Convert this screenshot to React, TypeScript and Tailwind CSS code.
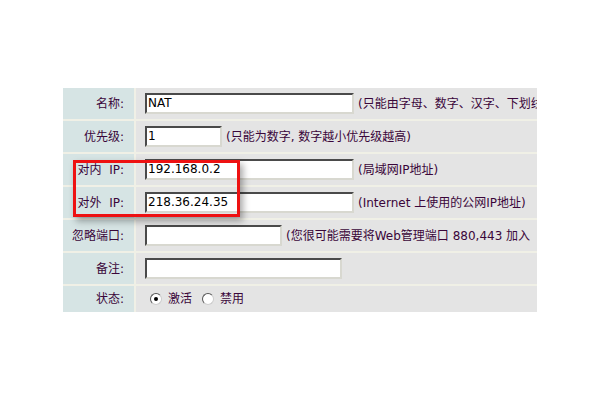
const font = { fontFamily: '"DejaVu Sans", "Noto Sans CJK SC", sans-serif' };

function Field({ w, value }: { w: string; value?: string }) {
  return (
    <div
      className={`${w} h-[21px] shrink-0 bg-white border-2 border-t-[#4a4a4a] border-l-[#4a4a4a] border-r-[#d8d8d0] border-b-[#d8d8d0] pl-[1px] text-[12px] leading-[17px] text-black`}
    >
      {value}
    </div>
  );
}

function Hint({ children }: { children: React.ReactNode }) {
  return <span className="ml-1 whitespace-nowrap text-[12px] text-[#3a063a]">{children}</span>;
}

function Radio({ checked }: { checked?: boolean }) {
  return (
    <span className="flex h-[12px] w-[12px] shrink-0 items-center justify-center rounded-full border border-t-[#555] border-l-[#555] border-r-[#ccc] border-b-[#ccc] bg-white">
      {checked && <span className="h-[4px] w-[4px] rounded-full bg-black" />}
    </span>
  );
}

function Row({ label, h = 'h-[31px]', children }: { label: string; h?: string; children: React.ReactNode }) {
  return (
    <div className={`flex ${h} gap-[2px]`}>
      <div className="flex w-[71px] shrink-0 items-center justify-end bg-[#d6e4e4] pr-[10px] text-[12px] text-[#3a063a] whitespace-pre">
        {label}
      </div>
      <div className="flex flex-1 items-center overflow-hidden bg-[#e4e4e4] pl-[9px]">{children}</div>
    </div>
  );
}

export default function App() {
  return (
    <div className="h-[400px] w-[600px] bg-white pl-[63px] pt-[88px]" style={font}>
      <div className="relative flex w-[474px] flex-col gap-[2px] bg-[#f0f0e6]">
        <Row label="名称:">
          <Field w="w-[209px]" value="NAT" />
          <Hint>(只能由字母、数字、汉字、下划线组成)</Hint>
        </Row>
        <Row label="优先级:">
          <Field w="w-[77px]" value="1" />
          <Hint>(只能为数字, 数字越小优先级越高)</Hint>
        </Row>
        <Row label="对内  IP:">
          <Field w="w-[209px]" value="192.168.0.2" />
          <Hint>(局域网IP地址)</Hint>
        </Row>
        <Row label="对外  IP:">
          <Field w="w-[209px]" value="218.36.24.35" />
          <Hint>(Internet 上使用的公网IP地址)</Hint>
        </Row>
        <Row label="忽略端口:">
          <Field w="w-[137px]" />
          <Hint>(您很可能需要将Web管理端口 880,443 加入</Hint>
        </Row>
        <Row label="备注:">
          <Field w="w-[197px]" />
        </Row>
        <Row label="状态:" h="h-[26px]">
          <div className="flex items-center pl-[5px] text-[12px] text-[#3a063a]">
            <Radio checked />
            <span className="ml-[6px]">激活</span>
            <span className="ml-[10px]">
              <Radio />
            </span>
            <span className="ml-[6px]">禁用</span>
          </div>
        </Row>
        <div className="pointer-events-none absolute left-[10px] top-[72px] h-[57px] w-[167px] border-[3px] border-[#ee1111] shadow-[3px_4px_7px_rgba(0,0,0,0.35)]" />
      </div>
    </div>
  );
}
